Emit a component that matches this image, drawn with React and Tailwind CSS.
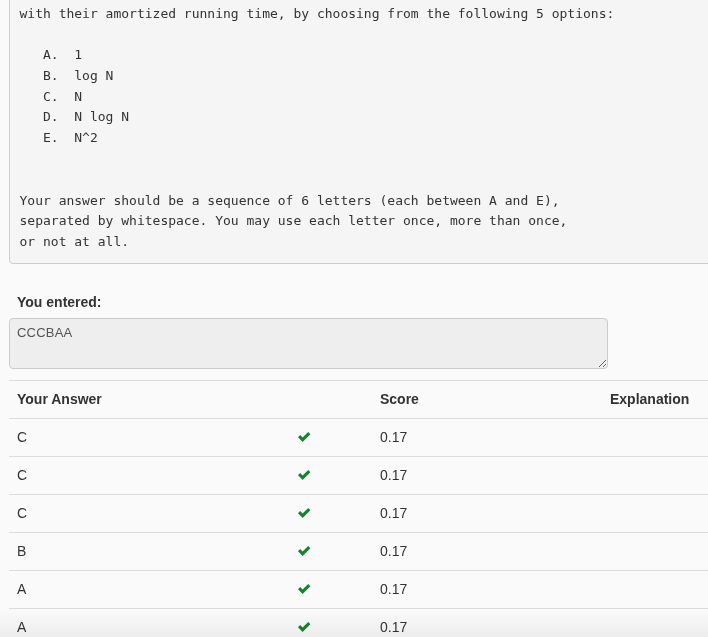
import React from "react";

const promptLines = [
  "with their amortized running time, by choosing from the following 5 options:",
  "",
  "   A.  1",
  "   B.  log N",
  "   C.  N",
  "   D.  N log N",
  "   E.  N^2",
  "",
  "",
  "Your answer should be a sequence of 6 letters (each between A and E),",
  "separated by whitespace. You may use each letter once, more than once,",
  "or not at all.",
];

const answers = ["C", "C", "C", "B", "A", "A"];

function CheckIcon() {
  return (
    <svg width="13" height="10" viewBox="0 0 13 10" className="text-[#13852f]">
      <path d="M0 5.2 L2.1 3.1 L4.6 5.6 L10.2 0 L12.4 2.2 L4.6 10 Z" fill="currentColor" />
    </svg>
  );
}

export default function App() {
  return (
    <div className="relative w-[708px] h-[637px] overflow-hidden bg-[#fafafa] text-[#333] text-[14px] font-['Liberation_Sans',Arial,sans-serif]">
      <div className="pl-[9px]">
        {/* problem statement, scrolled so its top is off screen */}
        <pre className="-mt-[7px] w-[760px] bg-[#f5f5f5] border border-[#ccc] rounded-[4px] p-[9.5px] text-[13px] leading-[20.8px] text-[#333] font-['DejaVu_Sans_Mono',monospace] whitespace-pre">
          {promptLines.join("\n")}
        </pre>

        <div className="mt-[28px] pl-[8px] h-[20px] leading-[20px] font-bold">You entered:</div>

        <textarea
          readOnly
          value="CCCBAA"
          className="mt-[6px] block w-[599px] h-[51px] bg-[#eee] border border-[#ccc] rounded-[4px] pl-[7px] pt-[4px] text-[13px] leading-[20px] tracking-[0.2px] text-[#555] font-['Liberation_Sans',Arial,sans-serif] outline-none"
        />

        <div className="mt-[11px] w-[760px]">
          <div className="grid grid-cols-[280px_83px_230px_1fr] h-[39px] items-center border-t border-b border-[#ddd] font-bold">
            <div className="px-[8px]">Your Answer</div>
            <div className="px-[8px]"></div>
            <div className="px-[8px]">Score</div>
            <div className="px-[8px]">Explanation</div>
          </div>
          {answers.map((a, i) => (
            <div
              key={i}
              className="grid grid-cols-[280px_83px_230px_1fr] h-[38px] items-center border-b border-[#ddd]"
            >
              <div className="px-[8px]">{a}</div>
              <div className="pl-[9px] flex items-center">
                <CheckIcon />
              </div>
              <div className="px-[8px]">0.17</div>
              <div className="px-[8px]"></div>
            </div>
          ))}
        </div>
      </div>

      <div className="absolute left-0 right-0 bottom-0 h-[28px] bg-gradient-to-b from-[#ffffff] to-[#f2f2f2] mix-blend-multiply pointer-events-none" />
    </div>
  );
}
